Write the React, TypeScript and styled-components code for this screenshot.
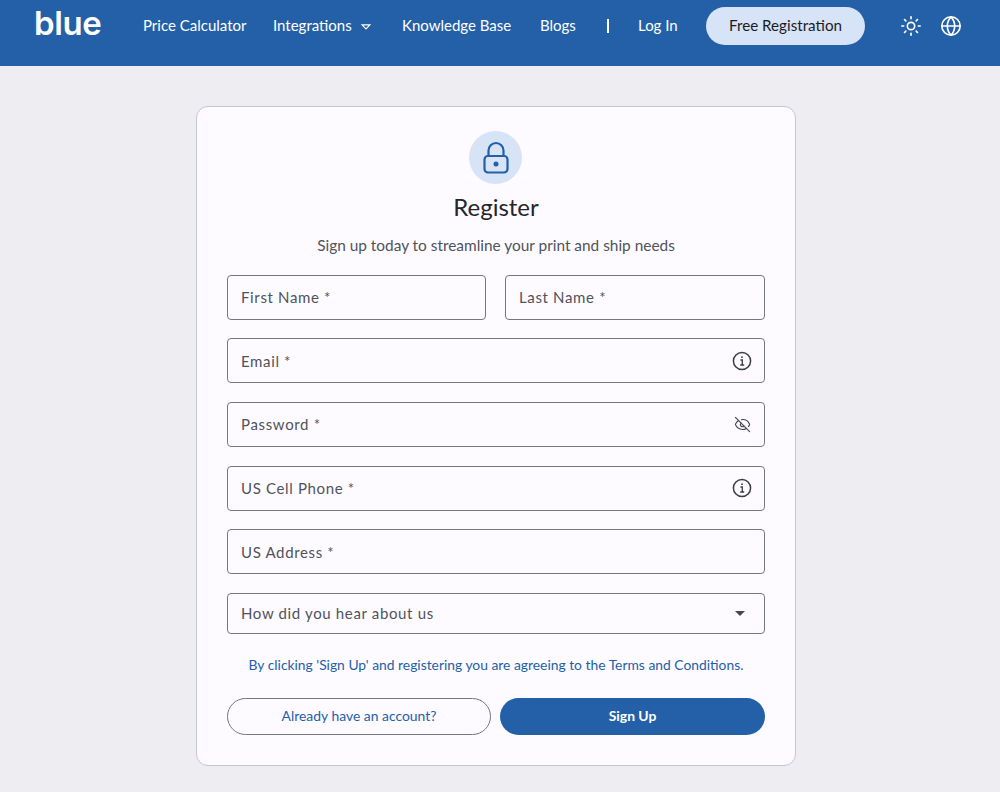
import { createGlobalStyle, styled } from "styled-components";
import { EyeOff, Globe, Sun } from "lucide-react";

const BLUE = "#2460a7";
const FONT = `"Lato", "Noto Sans", sans-serif`;
const MUTED = "#50535b";

const GlobalStyle = createGlobalStyle`
  html, body {
    margin: 0;
    padding: 0;
    background: #eeeef2;
    font-family: ${FONT};
    overflow: hidden;
  }
  * { box-sizing: border-box; }
`;

const Header = styled.header`
  height: 66px;
  background: ${BLUE};
  padding: 7px 0 0 34px;
  display: flex;
  align-items: flex-start;
  color: #fff;
`;

const Logo = styled.div`
  flex: none;
  width: 109px;
  height: 38px;
  margin-top: -3px;
  font-family: "Inter", sans-serif;
  font-size: 33px;
  font-weight: 600;
  line-height: 38px;
  letter-spacing: -0.4px;
`;

const Nav = styled.nav`
  flex: none;
  height: 38px;
  display: flex;
  align-items: center;
`;

const NavLink = styled.a<{ $w: number }>`
  flex: none;
  width: ${(p) => p.$w}px;
  padding-bottom: 2px;
  font-size: 15px;
  line-height: 36px;
  white-space: nowrap;
  color: #fff;
`;

const Caret = styled.svg`
  flex: none;
  width: 10px;
  height: 6px;
  margin: 1px 31px 0 10px;
`;

const Divider = styled.span`
  flex: none;
  width: 2px;
  height: 14px;
  background: #fff;
  margin: 0 29px 0 29px;
`;

const FreeButton = styled.button`
  flex: none;
  width: 159px;
  height: 38px;
  border: 0;
  border-radius: 19px;
  background: #d7e3f7;
  color: #1b1b1f;
  font: 400 15.2px ${FONT};
  padding: 0 0 2px;
  margin-right: 35px;
`;

const IconSlot = styled.span`
  flex: none;
  display: flex;
  width: 22px;
  height: 22px;
  margin-right: 18px;
`;

const Main = styled.main`
  display: flex;
  justify-content: center;
  padding: 40px 8px 26px 0;
`;

const Card = styled.section`
  width: 600px;
  height: 660px;
  background: #fdfbff;
  border: 1px solid #c4c6d0;
  border-radius: 12px;
  padding: 24px 30px 0;
  display: flex;
  flex-direction: column;
  align-items: stretch;
`;

const LockBadge = styled.div`
  width: 53px;
  height: 53px;
  margin-left: 242px;
  border-radius: 50%;
  background: #d7e3f7;
  color: ${BLUE};
  display: flex;
  align-items: center;
  justify-content: center;
`;

const Title = styled.h1`
  margin: 6px 0 0;
  text-align: center;
  font-size: 24px;
  font-weight: 400;
  line-height: 33px;
  color: #26262a;
`;

const Subtitle = styled.p`
  margin: 12px 0 0;
  text-align: center;
  font-size: 15.4px;
  line-height: 20px;
  color: ${MUTED};
`;

const Fields = styled.form`
  margin-top: 19.67px;
  display: flex;
  flex-direction: column;
  gap: 18.67px;
`;

const Row = styled.div`
  display: grid;
  grid-template-columns: 259px 260px;
  gap: 19px;
`;

const Field = styled.label<{ $h?: number }>`
  position: relative;
  display: flex;
  align-items: center;
  height: ${(p) => p.$h ?? 45}px;
  border: 1px solid #74777f;
  border-radius: 4px;
  padding: 0 14px 0 13px;
`;

const Input = styled.input`
  flex: 1;
  min-width: 0;
  border: 0;
  outline: 0;
  padding: 0;
  background: transparent;
  font: 400 15px ${FONT};
  letter-spacing: 0.65px;
  color: ${MUTED};

  &::placeholder {
    color: ${MUTED};
    opacity: 1;
  }
`;

const Adornment = styled.span<{ $mr?: number }>`
  display: flex;
  margin-right: ${(p) => p.$mr ?? -2}px;
  color: #44474f;
`;

const SelectValue = styled.span`
  flex: 1;
  font-size: 15px;
  letter-spacing: 0.65px;
  color: ${MUTED};
`;

const SelectArrow = styled.span`
  width: 0;
  height: 0;
  margin-right: 5px;
  border-left: 5px solid transparent;
  border-right: 5px solid transparent;
  border-top: 5px solid #44474f;
`;

const Terms = styled.p`
  margin: 22px 0 0;
  text-align: center;
  font-size: 13.85px;
  line-height: 18px;
  color: ${BLUE};
`;

const Actions = styled.div`
  margin-top: 24px;
  display: grid;
  grid-template-columns: 264px 265px;
  gap: 9px;
`;

const PillButton = styled.button<{ $filled?: boolean }>`
  height: 37px;
  padding: 0 0 2px;
  border-radius: 19px;
  border: ${(p) => (p.$filled ? "0" : "1px solid #74777f")};
  background: ${(p) => (p.$filled ? BLUE : "transparent")};
  color: ${(p) => (p.$filled ? "#fff" : BLUE)};
  font: ${(p) => (p.$filled ? 700 : 400)} 13.9px ${FONT};
`;

function InfoIcon() {
  return (
    <svg width="20" height="20" viewBox="0 0 20 20" fill="none" stroke="#3a3d44">
      <circle cx="10" cy="10" r="8.6" strokeWidth="1.5" />
      <path d="M8.4 9h1.9v5M8.2 14h4" strokeWidth="1.3" />
      <circle cx="10" cy="6.2" r="0.9" fill="#3a3d44" stroke="none" />
    </svg>
  );
}

function BlueLock() {
  return (
    <svg width="26" height="33" viewBox="0 0 26 33" fill="none" stroke="currentColor" strokeWidth="2.2">
      <rect x="1.5" y="15" width="23" height="16.5" rx="3.5" />
      <path d="M5.5 15V9.5a7.5 7.5 0 0 1 15 0V15" />
      <circle cx="13" cy="23" r="2.5" fill="currentColor" stroke="none" />
    </svg>
  );
}

export default function App() {
  return (
    <>
      <GlobalStyle />
      <Header>
        <Logo>blue</Logo>
        <Nav>
          <NavLink $w={130}>Price Calculator</NavLink>
          <NavLink $w={78}>Integrations</NavLink>
          <Caret viewBox="0 0 10 6" fill="none" stroke="#fff" strokeWidth="1.2">
            <path d="M1 .8h8L5 5z" />
          </Caret>
          <NavLink $w={138}>Knowledge Base</NavLink>
          <NavLink $w={38}>Blogs</NavLink>
          <Divider />
          <NavLink $w={68}>Log In</NavLink>
          <FreeButton type="button">Free Registration</FreeButton>
          <IconSlot>
            <Sun size={22} strokeWidth={1.8} />
          </IconSlot>
          <IconSlot>
            <Globe size={22} strokeWidth={1.8} />
          </IconSlot>
        </Nav>
      </Header>
      <Main>
        <Card>
          <LockBadge>
            <BlueLock />
          </LockBadge>
          <Title>Register</Title>
          <Subtitle>Sign up today to streamline your print and ship needs</Subtitle>
          <Fields>
            <Row>
              <Field>
                <Input placeholder="First Name *" />
              </Field>
              <Field>
                <Input placeholder="Last Name *" />
              </Field>
            </Row>
            <Field>
              <Input placeholder="Email *" />
              <Adornment>
                <InfoIcon />
              </Adornment>
            </Field>
            <Field>
              <Input placeholder="Password *" />
              <Adornment $mr={-1}>
                <EyeOff size={17} strokeWidth={1.6} />
              </Adornment>
            </Field>
            <Field>
              <Input placeholder="US Cell Phone *" />
              <Adornment>
                <InfoIcon />
              </Adornment>
            </Field>
            <Field>
              <Input placeholder="US Address *" />
            </Field>
            <Field $h={41}>
              <SelectValue>How did you hear about us</SelectValue>
              <SelectArrow />
            </Field>
          </Fields>
          <Terms>By clicking 'Sign Up' and registering you are agreeing to the Terms and Conditions.</Terms>
          <Actions>
            <PillButton type="button">Already have an account?</PillButton>
            <PillButton type="button" $filled>
              Sign Up
            </PillButton>
          </Actions>
        </Card>
      </Main>
    </>
  );
}
